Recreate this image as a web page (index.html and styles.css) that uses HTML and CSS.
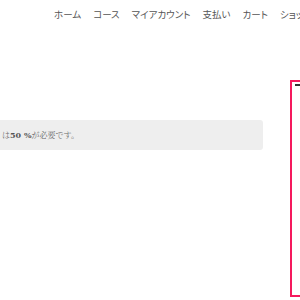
FILE: index.html
```html
<!DOCTYPE html>
<html lang="ja">
<head>
<meta charset="utf-8">
<link rel="stylesheet" href="styles.css">
</head>
<body>
<header class="site-header">
  <nav class="nav">
    <a class="nav-item">ホーム</a>
    <a class="nav-item">コース</a>
    <a class="nav-item">マイアカウント</a>
    <a class="nav-item">支払い</a>
    <a class="nav-item">カート</a>
    <a class="nav-item">ショップ</a>
  </nav>
</header>
<div class="layout">
  <main class="main">
    <div class="notice">は<strong>50 %</strong>が必要です。</div>
  </main>
  <aside class="sidebar">
    <div class="sidebar-rule"></div>
  </aside>
</div>
</body>
</html>
```
FILE: styles.css
```css
html, body {
  margin: 0;
  padding: 0;
  background: #fff;
  overflow: hidden;
  width: 300px;
  height: 300px;
}
body {
  font-family: "DejaVu Serif", "Noto Sans CJK JP", serif;
  color: #555;
}
.site-header {
  height: 28px;
  overflow: hidden;
}
.nav {
  display: flex;
  gap: 12px;
  padding-left: 54px;
  padding-top: 9px;
  white-space: nowrap;
  font-family: "Noto Sans CJK JP", sans-serif;
  font-size: 9.5px;
  font-feature-settings: "palt";
  line-height: 10px;
  color: #555;
}
.nav-item {
  flex: none;
}
.layout {
  display: flex;
  align-items: flex-start;
  gap: 27px;
  margin-top: 52px;
}
.main {
  flex: none;
  width: 263px;
  padding-top: 40px;
}
.notice {
  background: #eeeeee;
  border-radius: 0 3px 3px 0;
  height: 30px;
  box-sizing: border-box;
  padding-left: 2px;
  font-size: 8px;
  line-height: 30px;
  color: #666;
  font-family: "Noto Serif CJK JP", "Noto Sans CJK JP", serif;
}
.notice strong {
  font-family: "DejaVu Serif", serif;
  font-weight: bold;
  color: #555;
  font-size: 8px;
}
.sidebar {
  flex: none;
  width: 200px;
  height: 217px;
  box-sizing: border-box;
  border: 2px solid #f5195d;
  padding: 2px 3px;
}
.sidebar-rule {
  border-top: 2px solid #333;
}
```
